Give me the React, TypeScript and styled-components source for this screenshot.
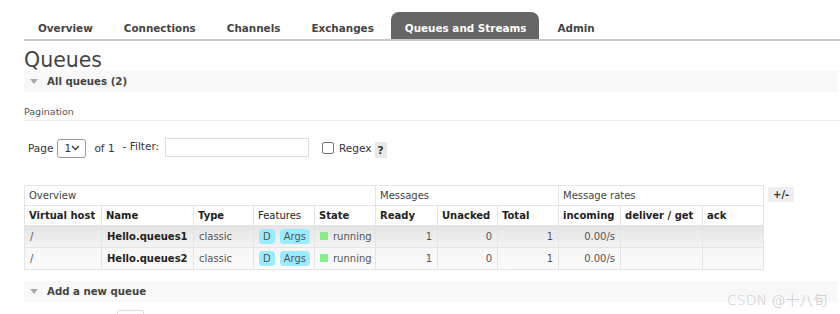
import styled, { createGlobalStyle } from "styled-components";

const Global = createGlobalStyle`
  html, body {
    margin: 0;
    padding: 0;
    background: #fff;
    overflow: hidden;
  }
  body {
    font-family: "DejaVu Sans", Verdana, sans-serif;
    color: #484848;
  }
`;

const tabs = ["Overview", "Connections", "Channels", "Exchanges", "Queues and Streams", "Admin"];

type Queue = { vhost: string; name: string; ready: number; unacked: number; total: number; rate: string };

const queues: Queue[] = [
  { vhost: "/", name: "Hello.queues1", ready: 1, unacked: 0, total: 1, rate: "0.00/s" },
  { vhost: "/", name: "Hello.queues2", ready: 1, unacked: 0, total: 1, rate: "0.00/s" },
];

const colWidths = [77, 92, 60, 61, 61, 62, 60, 61, 62, 82, 61];

const App = () => {
  return (
    <Page>
      <Global />
      <TabBar>
        {tabs.map((t) => (
          <Tab key={t} active={t === "Queues and Streams"}>
            {t}
          </Tab>
        ))}
      </TabBar>
      <Main>
        <Title>Queues</Title>
        <SectionBar>
          <Arrow />
          All queues (2)
        </SectionBar>
        <SubHeading>Pagination</SubHeading>
        <FilterRow>
          <Label>Page</Label>
          <Select>
            1
            <svg width="9" height="6" viewBox="0 0 9 6">
              <path d="M1 1l3.5 3.5L8 1" fill="none" stroke="#333" strokeWidth="1.3" />
            </svg>
          </Select>
          <Label ml={8}>of 1</Label>
          <Label ml={8} top>- Filter:</Label>
          <TextBox />
          <Check />
          <Label ml={5}>Regex</Label>
          <Help>?</Help>
        </FilterRow>
        <TableRow>
          <Table>
            <colgroup>
              {colWidths.map((w, i) => (
                <col key={i} style={{ width: w }} />
              ))}
            </colgroup>
            <thead>
              <tr>
                <Group colSpan={5}>Overview</Group>
                <Group colSpan={3}>Messages</Group>
                <Group colSpan={3}>Message rates</Group>
              </tr>
              <tr>
                <Th>Virtual host</Th>
                <Th>Name</Th>
                <Th>Type</Th>
                <Th plain>Features</Th>
                <Th>State</Th>
                <Th>Ready</Th>
                <Th>Unacked</Th>
                <Th>Total</Th>
                <Th>incoming</Th>
                <Th>deliver / get</Th>
                <Th>ack</Th>
              </tr>
            </thead>
            <tbody>
              {queues.map((q, i) => (
                <Row key={q.name} alt={i % 2 === 0}>
                  <Td>{q.vhost}</Td>
                  <Td bold>{q.name}</Td>
                  <Td>classic</Td>
                  <Td>
                    <Badge>D</Badge>
                    <Badge>Args</Badge>
                  </Td>
                  <Td>
                    <StateDot />
                    running
                  </Td>
                  <Td right>{q.ready}</Td>
                  <Td right>{q.unacked}</Td>
                  <Td right>{q.total}</Td>
                  <Td right>{q.rate}</Td>
                  <Td />
                  <Td />
                </Row>
              ))}
            </tbody>
          </Table>
          <Toggle>+/-</Toggle>
        </TableRow>
        <SectionBar spaced>
          <Arrow />
          Add a new queue
        </SectionBar>
        <FormRow>
          <SmallBox />
        </FormRow>
      </Main>
      <Watermark>CSDN @十八旬</Watermark>
    </Page>
  );
};

export default App;

const Page = styled.div`
  position: relative;
  width: 840px;
  height: 314px;
  overflow: hidden;
  padding-left: 24px;
  box-sizing: border-box;
`;

const TabBar = styled.div`
  display: flex;
  align-items: flex-end;
  height: 41px;
  border-bottom: 2px solid #c8c8c8;
  box-sizing: border-box;
`;

const Tab = styled.div<{ active?: boolean }>`
  height: 27px;
  box-sizing: border-box;
  padding: 3px 13px 0 14px;
  line-height: 26px;
  margin-right: 4px;
  font-size: 10.4px;
  font-weight: bold;
  color: ${(p) => (p.active ? "#fff" : "#444")};
  background: ${(p) => (p.active ? "#666" : "transparent")};
  border-radius: 8px 8px 0 0;
  white-space: nowrap;
`;

const Main = styled.div`
  display: flex;
  flex-direction: column;
`;

const Title = styled.h1`
  margin: 7px 0 0;
  font-size: 20.5px;
  font-weight: normal;
  color: #444;
  line-height: 24px;
  height: 23px;
`;

const SectionBar = styled.div<{ spaced?: boolean }>`
  display: flex;
  align-items: center;
  height: 21px;
  margin-top: ${(p) => (p.spaced ? "11px" : "0")};
  background: #f8f8f8;
  margin-right: 2px;
  font-size: 10.2px;
  font-weight: bold;
  color: #444;
`;

const Arrow = styled.span`
  width: 0;
  height: 0;
  margin: 0 9px 0 6px;
  border-left: 4px solid transparent;
  border-right: 4px solid transparent;
  border-top: 5px solid #aaa;
`;

const SubHeading = styled.div`
  margin-top: 14px;
  padding-bottom: 3px;
  font-size: 9.5px;
  line-height: 11px;
  color: #555;
  border-bottom: 1px solid #eee;
`;

const FilterRow = styled.div`
  display: flex;
  align-items: center;
  height: 20px;
  margin-top: 17px;
  padding-left: 4px;
  font-size: 10.5px;
  color: #333;
`;

const Label = styled.span<{ ml?: number; top?: boolean }>`
  margin-left: ${(p) => p.ml ?? 0}px;
  align-self: ${(p) => (p.top ? "flex-start" : "center")};
  margin-top: ${(p) => (p.top ? "2px" : "0")};
`;

const Select = styled.div`
  display: flex;
  align-items: center;
  justify-content: space-between;
  width: 29px;
  height: 19px;
  padding: 0 5px 0 6px;
  margin-left: 4px;
  box-sizing: border-box;
  border: 1px solid #999;
  border-radius: 3px;
`;

const TextBox = styled.div`
  width: 144px;
  height: 19px;
  box-sizing: border-box;
  border: 1px solid #ddd;
  margin-left: 6px;
  align-self: flex-start;
`;

const Check = styled.div`
  width: 10px;
  height: 10px;
  margin-left: 13px;
  border: 1px solid #777;
  border-radius: 2px;
`;

const Help = styled.span`
  margin-left: 3px;
  margin-top: 3px;
  padding: 2px 3px;
  background: #e8e8e8;
  font-weight: bold;
`;

const TableRow = styled.div`
  display: flex;
  align-items: flex-start;
  gap: 4px;
  margin-top: 27px;
`;

const Table = styled.table`
  table-layout: fixed;
  width: 739px;
  border-collapse: collapse;
  font-size: 10px;
  color: #333;
  border: 1px solid #e4e4e4;
`;

const Group = styled.th`
  height: 19px;
  padding: 0 4px;
  text-align: left;
  font-weight: normal;
  color: #444;
  border: 1px solid #e4e4e4;
`;

const Th = styled.th<{ plain?: boolean }>`
  height: 19px;
  padding: 0 4px;
  text-align: left;
  white-space: nowrap;
  font-weight: ${(p) => (p.plain ? "normal" : "bold")};
  color: #222;
  border-right: 1px solid #e4e4e4;
`;

const Row = styled.tr<{ alt?: boolean }>`
  background: ${(p) =>
    p.alt ? "linear-gradient(#e4e4e4, #f4f4f4)" : "linear-gradient(#f6f6f6, #fcfcfc)"};
`;

const Td = styled.td<{ right?: boolean; bold?: boolean }>`
  height: 21px;
  padding: 0 5px;
  vertical-align: middle;
  white-space: nowrap;
  text-align: ${(p) => (p.right ? "right" : "left")};
  font-weight: ${(p) => (p.bold ? "bold" : "normal")};
  color: ${(p) => (p.bold ? "#222" : "#555")};
  border: 1px solid #e4e4e4;
`;

const Badge = styled.span`
  display: inline-block;
  padding: 0 4px;
  margin-right: 5px;
  border-radius: 4px;
  background: #99ebff;
  color: #555;
  line-height: 15px;
`;

const StateDot = styled.span`
  display: inline-block;
  width: 8px;
  height: 8px;
  margin-right: 5px;
  background: #88ee88;
`;

const Toggle = styled.div`
  margin-top: 2px;
  padding: 2px 5px;
  background: #eee;
  font-size: 10px;
  font-weight: bold;
  color: #333;
`;

const FormRow = styled.div`
  padding-left: 93px;
  margin-top: 8px;
`;

const SmallBox = styled.div`
  width: 25px;
  height: 12px;
  border: 1px solid #ddd;
  border-bottom: none;
  border-radius: 2px 2px 0 0;
`;

const Watermark = styled.div`
  position: absolute;
  left: 727px;
  top: 289px;
  font-family: "DejaVu Sans", "Noto Sans CJK SC", sans-serif;
  font-size: 14px;
  font-weight: 300;
  color: #cacaca;
`;
